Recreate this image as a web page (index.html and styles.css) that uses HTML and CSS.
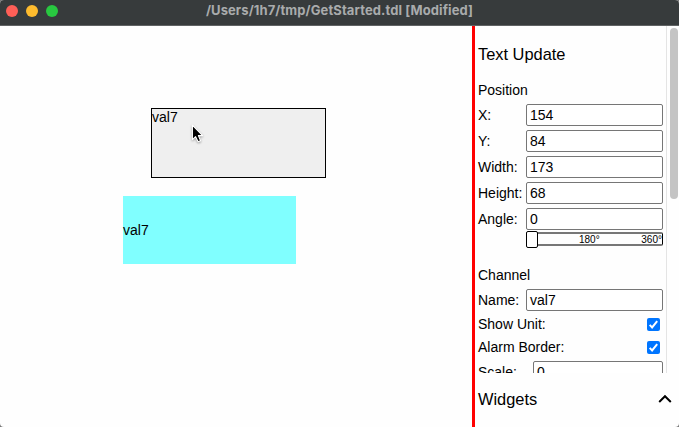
FILE: index.html
```
<!DOCTYPE html>
<html lang="en">
<head>
<meta charset="utf-8">
<title>GetStarted.tdl</title>
<link rel="stylesheet" href="styles.css">
</head>
<body>
<div class="window">
  <header class="titlebar">
    <div class="lights"><i class="light close"></i><i class="light minimize"></i><i class="light expand"></i></div>
    <div class="title">/Users/1h7/tmp/GetStarted.tdl [Modified]</div>
  </header>
  <div class="workspace">
    <main class="canvas">
      <div class="widget ghost">val7</div>
      <div class="widget update">val7</div>
      <svg class="cursor" width="18" height="24" viewBox="0 0 18 24"><path d="M2.4 1.2V15.6L5.6 12.7L8.1 17.8L10.6 16.7L8.4 11.6H12.6Z" fill="#000" stroke="#fff" stroke-width="1.1" stroke-linejoin="round"/></svg>
    </main>
    <aside class="sidebar">
      <section class="properties">
        <div class="form">
          <h2 class="heading">Text Update</h2>
          <h3 class="group">Position</h3>
          <div class="row"><span class="label">X:</span><div class="field">154</div></div>
          <div class="row"><span class="label">Y:</span><div class="field">84</div></div>
          <div class="row"><span class="label">Width:</span><div class="field">173</div></div>
          <div class="row"><span class="label">Height:</span><div class="field">68</div></div>
          <div class="row"><span class="label">Angle:</span><div class="field">0</div></div>
          <div class="slider"><i class="knob"></i><span class="mid">180°</span><span class="max">360°</span></div>
          <h3 class="group channel">Channel</h3>
          <div class="row"><span class="label">Name:</span><div class="field">val7</div></div>
          <div class="check-row"><span>Show Unit:</span><svg class="check" viewBox="0 0 13 13"><rect width="13" height="13" rx="2" fill="#0075ff"/><path d="M2.7 6.9L5.1 9.4L10.2 3.2" fill="none" stroke="#fff" stroke-width="2"/></svg></div>
          <div class="check-row"><span>Alarm Border:</span><svg class="check" viewBox="0 0 13 13"><rect width="13" height="13" rx="2" fill="#0075ff"/><path d="M2.7 6.9L5.1 9.4L10.2 3.2" fill="none" stroke="#fff" stroke-width="2"/></svg></div>
          <div class="row scale"><span class="label">Scale:</span><div class="field">0</div></div>
        </div>
        <div class="scrollbar"><div class="thumb"></div></div>
      </section>
      <section class="widgets">
        <span>Widgets</span>
        <svg class="chevron" width="14" height="10" viewBox="0 0 14 10"><path d="M1.2 8L7 2.2L12.8 8" fill="none" stroke="#000" stroke-width="2"/></svg>
      </section>
    </aside>
  </div>
</div>
</body>
</html>
```
FILE: styles.css
```
* { box-sizing: border-box; }
body { margin: 0; background: #777; font: 14px/16px "Liberation Sans", Arial, sans-serif; color: #000; }
.window { width: 679px; height: 427px; display: flex; flex-direction: column; overflow: hidden; border-radius: 4px; background: #fefefe; }
.titlebar { height: 26px; flex: none; display: grid; grid-template-columns: 60px 1fr 60px; background: #373b3c; border-bottom: 1px solid #606364; }
.lights { display: flex; gap: 8px; padding: 5px 0 0 6px; }
.light { width: 12px; height: 12px; flex: none; border-radius: 50%; }
.close { background: #ff5f57; }
.minimize { background: #febc2e; }
.expand { background: #28c840; }
.title { text-align: center; font: 700 13px/21px Inter, sans-serif; letter-spacing: .1px; color: #a9abac; white-space: nowrap; }
.workspace { flex: 1; display: flex; min-height: 0; }
.canvas { flex: 1; position: relative; }
.widget { position: absolute; }
.ghost { left: 151px; top: 82px; width: 175px; height: 70px; border: 1px solid #000; background: #efefef; }
.update { left: 123px; top: 170px; width: 173px; height: 68px; line-height: 68px; background: #80ffff; }
.cursor { position: absolute; left: 190px; top: 98px; filter: drop-shadow(0 1px 1px rgba(0, 0, 0, .35)); }
.sidebar { width: 207px; flex: none; border-left: 3px solid #f00; display: flex; flex-direction: column; }
.properties { height: 347px; display: flex; overflow: hidden; }
.form { width: 191px; flex: none; padding: 0 3px; }
.heading { margin: 18px 0 0; font-size: 16.4px; font-weight: 400; line-height: 20px; }
.group { margin: 18px 0 6px; font-size: 14px; font-weight: 400; line-height: 16px; }
.row { display: flex; align-items: center; height: 22px; margin-bottom: 4px; }
.label { width: 48px; flex: none; white-space: nowrap; }
.field { flex: 1; height: 22px; padding: 0 3px; border: 1px solid #767676; border-radius: 2px; background: #fff; line-height: 20px; }
.slider { position: relative; height: 14px; margin: -2px 0 0 48px; border: 1px solid #000; border-top: 2px solid #777; border-bottom: 2px solid #777; border-radius: 2px; font-size: 10px; line-height: 12px; }
.knob { position: absolute; left: -1px; top: -3px; width: 12px; height: 17px; border: 1px solid #000; border-radius: 2px; background: #fff; }
.mid { position: absolute; left: 52px; top: 0; }
.max { position: absolute; right: 0; top: 0; }
.channel { margin: 21px 0 6px; }
.check-row { display: flex; align-items: center; justify-content: space-between; height: 23px; padding-right: 3px; }
.row + .check-row { margin-top: -3px; }
.check { width: 13px; height: 13px; margin-top: 1px; }
.scale { margin-top: 3px; }
.scale .label { width: 55px; }
.scrollbar { width: 13px; flex: none; border-left: 1px solid #e4e4e4; padding: 2px 0 0 3px; }
.thumb { width: 8px; height: 171px; border-radius: 4px; background: #c4c4c4; }
.widgets { flex: 1; display: flex; align-items: center; justify-content: space-between; padding: 0 7px 3px 3px; font-size: 16.4px; line-height: 20px; }
.chevron { margin-top: 1px; }
```
